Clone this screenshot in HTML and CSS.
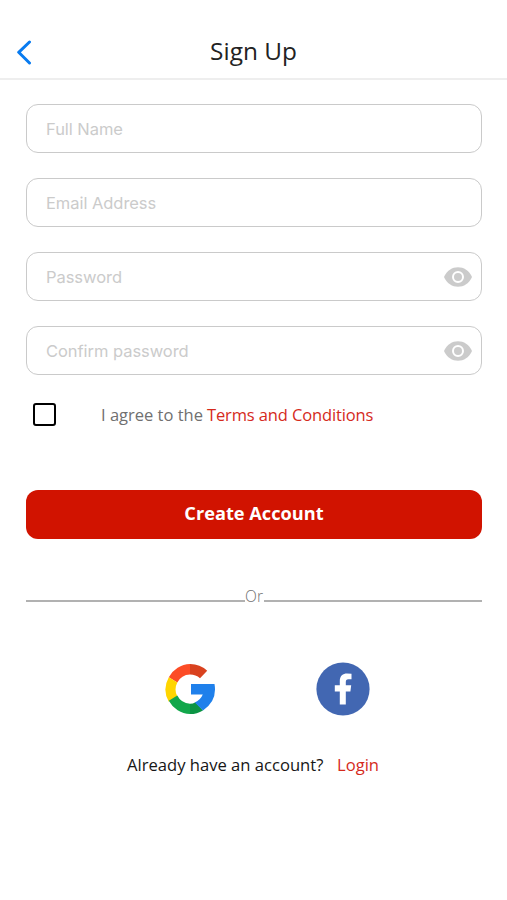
FILE: index.html
```html
<!DOCTYPE html>
<html lang="en">
<head>
<meta charset="utf-8">
<title>Sign Up</title>
<link rel="stylesheet" href="styles.css">
</head>
<body>
<header class="header">
  <a class="back" href="#" aria-label="Back"><svg width="16" height="26" viewBox="0 0 16 26"><path d="M13.500 3 2.700 13.300 13.500 24"/></svg></a>
  <h1 class="title">Sign Up</h1>
</header>
<main class="content">
  <form class="form">
    <div class="field"><input class="name" type="text" placeholder="Full Name"></div>
    <div class="field"><input class="email" type="text" placeholder="Email Address"></div>
    <div class="field"><input class="password" type="password" placeholder="Password"><svg class="eye" viewBox="0 0 28 20"><path d="M0 10C5.500-3 22.500-3 28 10C22.500 23 5.500 23 0 10Z"/><circle class="ring" cx="14" cy="10" r="5"/></svg></div>
    <div class="field"><input class="confirm" type="password" placeholder="Confirm password"><svg class="eye" viewBox="0 0 28 20"><path d="M0 10C5.500-3 22.500-3 28 10C22.500 23 5.500 23 0 10Z"/><circle class="ring" cx="14" cy="10" r="5"/></svg></div>
    <div class="terms">
      <span class="checkbox" role="checkbox" aria-checked="false" aria-label="Agree"></span>
      <span class="agree">I agree to the</span><a class="terms-link" href="#">Terms and Conditions</a>
    </div>
    <button class="submit" type="button"><span>Create Account</span></button>
  </form>
  <div class="divider"><span class="line"></span><span class="or">Or</span><span class="line"></span></div>
  <div class="social">
    <a href="#" aria-label="Google"><svg width="54" height="54" viewBox="0 0 54 54">
      <path fill="#fc4c26" d="M5.800 15.200A25 25 0 0 1 27 2V12.500A15 15 0 0 0 14.300 20.500Z"/>
      <path fill="#d9421f" d="M27 2A25 25 0 0 1 44.200 8.700L37 16.200A15 15 0 0 0 27 12.500Z"/>
      <path fill="#ffd500" d="M5.800 15.200A25 25 0 0 0 5.800 39.800L14.300 34.300A15 15 0 0 1 14.300 20.500Z"/>
      <path fill="#12a74b" d="M5.800 38.800A25 25 0 0 0 27 52V41.700A15 15 0 0 1 14.300 33.500Z"/>
      <path fill="#0b9444" d="M27 52A25 25 0 0 0 40 48.400L32.500 40.200Q30 41.700 27 41.700Z"/>
      <path fill="#1f80eb" d="M28 22H51.500Q54.500 39 40 48.400L31.800 40.500Q37.500 38 39.800 32.500H28Z"/>
    </svg></a>
    <a href="#" aria-label="Facebook"><svg width="54" height="54" viewBox="0 0 54 54"><circle cx="27" cy="27" r="26.600" fill="#4267b2"/><path fill="#fff" d="M23.800 42.500V29.500H18.800V23.200H23.800V19C23.800 13.700 27 11.400 31 11.400Q33.500 11.400 35.500 11.700V17.200H32.500C30.300 17.200 29.800 18.400 29.800 20.200V23.200H35.200L34.400 29.500H29.800V42.500Z"/></svg></a>
  </div>
  <p class="signin"><span class="question">Already have an account?</span><a class="login" href="#">Login</a></p>
</main>
</body>
</html>
```

FILE: styles.css
```css
* { box-sizing: border-box; }
body { margin: 0; background: #fff; font-family: "Open Sans", "Noto Sans", sans-serif; }
a { text-decoration: none; }
svg { display: block; }
.header { display: grid; grid-template-columns: 54px 1fr 54px; align-items: center; height: 80px; padding-top: 25px; border-bottom: 2px solid #eee; }
.back { padding-left: 16px; }
.back path { fill: none; stroke: #087bf0; stroke-width: 3; stroke-linecap: round; stroke-linejoin: round; }
.title { margin: 0 0 2px; text-align: center; font-size: 24.4px; line-height: 34px; font-weight: 400; color: #222; }
.content { padding: 24px 25px 0 26px; }
.form { display: flex; flex-direction: column; }
.field { display: flex; align-items: center; height: 49px; margin-bottom: 25.1px; padding: 1px 9px 0 19px; border: 1.5px solid #cacaca; border-radius: 12px; }
.field input { flex: 1; min-width: 0; border: 0; padding: 0; outline: 0; background: transparent; font-family: Inter, sans-serif; font-size: 16.5px; letter-spacing: -0.05px; }
.field input::placeholder { color: #cbcbcb; opacity: 1; }
.eye { width: 28px; height: 20px; fill: #cbcbcb; }
.ring { stroke: #fff; stroke-width: 2; }
.terms { display: flex; align-items: center; height: 24px; margin-top: 2px; padding-left: 7px; font-size: 16.500px; white-space: nowrap; }
.checkbox { width: 23px; height: 23px; margin-right: 45px; border: 2.500px solid #000; border-radius: 3px; }
.agree { width: 106px; color: #707070; }
.terms-link { letter-spacing: -0.13px; }
.terms-link, .login { color: #d52a1c; }
.submit { height: 49px; margin-top: 63.6px; padding: 0 0 3px; border: 0; border-radius: 12px; background: #d11300; color: #fff; font-family: "Open Sans", "Noto Sans", sans-serif; font-size: 18.2px; font-weight: 700; }
.divider { display: flex; align-items: flex-end; height: 22px; margin-top: 45px; padding-bottom: 4px; }
.line { flex: 1; height: 2px; background: #b1b1b1; }
.or { width: 19px; margin-bottom: -3px; text-align: center; font-size: 15.500px; line-height: 18px; color: #707070; font-weight: 300; }
.social { display: flex; justify-content: center; gap: 99px; margin-top: 56.500px; padding-left: 25px; }
.signin { display: flex; margin: 37px 0 0 101px; font-size: 16.600px; line-height: 24px; white-space: nowrap; }
.question { width: 210px; color: #161616; }
```
